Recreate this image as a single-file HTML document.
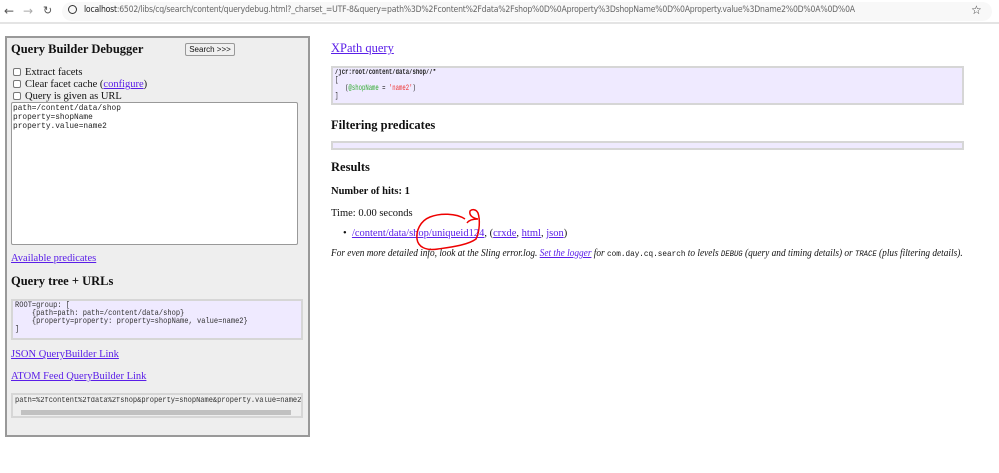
<!DOCTYPE html>
<html><head><meta charset="utf-8"><style>
*{margin:0;padding:0;box-sizing:border-box}
body{width:999px;height:473px;background:#fff;position:relative;overflow:hidden;font-family:"Liberation Serif",serif;font-size:11px;color:#111}
.a{position:absolute;white-space:nowrap}
a{color:#551a8b;text-decoration:underline}
.lk{color:#5a1ee8}
.m{font-family:"Liberation Mono","DejaVu Sans Mono",monospace;font-size:8px;line-height:9px}
.cb{display:inline-block;width:8px;height:8px;border:1px solid #777;border-radius:2px;background:#fff;vertical-align:-1px;margin-right:4px}
.pre{position:absolute;background:#efeaff;border:2px solid #d6d6d6;overflow:hidden}
.sx{transform-origin:left top;display:inline-block}
</style></head><body>
<div class="a" style="left:0;top:0;width:999px;height:24px;background:#fff;border-bottom:2px solid #e4e4e4"></div>
<div class="a" style="left:4px;top:4px;font-size:12px;color:#555;font-family:'DejaVu Sans',sans-serif">←</div>
<div class="a" style="left:23px;top:4px;font-size:12px;color:#aaa;font-family:'DejaVu Sans',sans-serif">→</div>
<div class="a" style="left:43px;top:4px;font-size:11px;color:#555;font-family:'DejaVu Sans',sans-serif">↻</div>
<div class="a" style="left:62px;top:2px;width:930px;height:19px;background:#f8f8f8;border-radius:10px"></div>
<div class="a" style="left:68px;top:5px;width:9px;height:9px;border:1.5px solid #333;border-radius:50%"></div>
<div class="a sx" style="left:84px;top:5px;font-family:'DejaVu Sans',sans-serif;font-size:9px;color:#666;letter-spacing:-0.25px;transform:scaleX(0.86)"><span style="color:#222">localhost</span>:6502/libs/cq/search/content/querydebug.html?_charset_=UTF-8&amp;query=path%3D%2Fcontent%2Fdata%2Fshop%0D%0Aproperty%3DshopName%0D%0Aproperty.value%3Dname2%0D%0A%0D%0A</div>
<div class="a" style="left:971px;top:3px;font-size:12px;color:#333;font-family:'DejaVu Sans',sans-serif">☆</div>

<div class="a" style="left:5px;top:36px;width:305px;height:401px;background:#eee;border:2px solid #999"></div>
<div class="a" style="left:11px;top:42px;font-size:12.5px;font-weight:bold">Query Builder Debugger</div>
<div class="a" style="left:185px;top:43px;width:50px;height:13px;border:1px solid #999;background:#f0f0f0;border-radius:2px;font-family:'Liberation Sans',sans-serif;font-size:8px;text-align:center;line-height:11px">Search &gt;&gt;&gt;</div>
<div class="a" style="left:13px;top:67px;font-size:10.5px"><span class="cb"></span>Extract facets</div>
<div class="a" style="left:13px;top:79px;font-size:10.5px"><span class="cb"></span>Clear facet cache (<a class="lk">configure</a>)</div>
<div class="a" style="left:13px;top:91px;font-size:10.5px"><span class="cb"></span>Query is given as URL</div>
<div class="a" style="left:11px;top:102px;width:287px;height:143px;background:#fff;border:1px solid #999;border-radius:2px"></div>
<div class="a m sx" style="left:13px;top:104px;font-size:8.5px;line-height:9px;color:#222;transform:scaleX(0.92)">path=/content/data/shop<br>property=shopName<br>property.value=name2</div>
<div class="a" style="left:11px;top:253px;font-size:10.5px"><a class="lk">Available predicates</a></div>
<div class="a" style="left:11px;top:274px;font-size:12.5px;font-weight:bold">Query tree + URLs</div>
<div class="pre" style="left:11px;top:299px;width:292px;height:41px"></div>
<div class="a m sx" style="left:15px;top:302px;color:#333;font-size:8.3px;line-height:8px;transform:scaleX(0.85)">ROOT=group: [<br>&nbsp;&nbsp;&nbsp;&nbsp;{path=path: path=/content/data/shop}<br>&nbsp;&nbsp;&nbsp;&nbsp;{property=property: property=shopName, value=name2}<br>]</div>
<div class="a" style="left:11px;top:349px;font-size:10.5px"><a class="lk">JSON QueryBuilder Link</a></div>
<div class="a" style="left:11px;top:371px;font-size:10.5px"><a class="lk">ATOM Feed QueryBuilder Link</a></div>
<div class="a" style="left:11px;top:393px;width:292px;height:25px;background:#eee;border:2px solid #d6d6d6;overflow:hidden"></div>
<div class="a m sx" style="left:15px;top:397px;color:#333;font-size:7.8px;transform:scaleX(0.9)">path=%2fcontent%2fdata%2fshop&amp;property=shopName&amp;property.value=name2</div>
<div class="a" style="left:21px;top:410px;width:270px;height:5px;background:#c1c1c1"></div>

<div class="a" style="left:331px;top:41px;font-size:12.5px"><a class="lk">XPath query</a></div>
<div class="pre" style="left:331px;top:66px;width:633px;height:39px"></div>
<div class="a m sx" style="left:335px;top:69px;color:#222;font-size:7.8px;line-height:8px;transform:scaleX(0.72)"><b>/jcr:root/content/data/shop//*</b><br>[<br>&nbsp;&nbsp;&nbsp;(<span style="color:#3a3">@shopName</span> = <span style="color:#e33">'name2'</span>)<br>]</div>
<div class="a" style="left:331px;top:118px;font-size:12.5px;font-weight:bold">Filtering predicates</div>
<div class="pre" style="left:331px;top:141px;width:633px;height:9px"></div>
<div class="a" style="left:331px;top:160px;font-size:12.5px;font-weight:bold">Results</div>
<div class="a" style="left:331px;top:186px;font-size:10.5px;font-weight:bold">Number of hits: 1</div>
<div class="a" style="left:331px;top:208px;font-size:10.5px">Time: 0.00 seconds</div>
<div class="a" style="left:343px;top:228px;font-size:10.5px">•&nbsp;&nbsp;<a class="lk">/content/data/shop/uniqueid124</a>, (<a class="lk">crxde</a>, <a class="lk">html</a>, <a class="lk">json</a>)</div>
<div class="a sx" style="left:331px;top:248px;font-size:10.3px;font-style:italic;transform:scaleX(0.905)">For even more detailed info, look at the Sling error.log. <a class="lk">Set the logger</a> for <span class="m" style="font-style:normal;font-size:8.5px">com.day.cq.search</span> to levels <span class="m" style="font-size:8px">DEBUG</span> (query and timing details) or <span class="m" style="font-size:8px">TRACE</span> (plus filtering details).</div>
<svg class="a" style="left:410px;top:205px" width="80" height="50" viewBox="0 0 80 50"><path d="M55 14 C46 8 30 8 20 12 C10 16 6 26 7 34 C8 42 16 46 28 44 C42 42 58 40 66 34 C70 26 70 14 68 8 C66 4 62 4 60 6 C59 10 62 13 68 14 M68 14 C63 14 59 15 57 18" fill="none" stroke="#e00" stroke-width="1.5"/></svg>
</body></html>
